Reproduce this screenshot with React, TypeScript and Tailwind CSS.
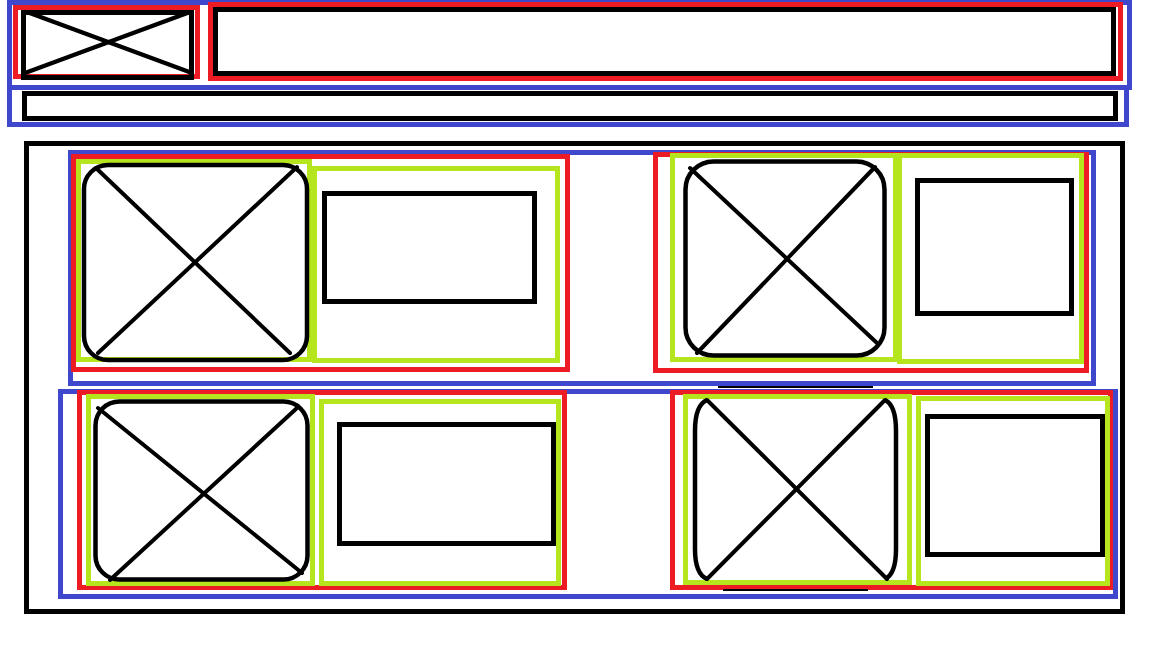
import type { ReactNode } from "react";

// wireframe palette
const BLUE = "border-[5px] border-[#3f48cc]";
const RED = "border-[5px] border-[#ed1c24]";
const GREEN = "border-[5px] border-[#b5e61d]";
const BLACK = "border-[5px] border-black";

interface CardProps {
  frame: string;
  image: string;
  text: string;
  block: string;
  shape: ReactNode;
}

function Card({ frame, image, text, block, shape }: CardProps) {
  return (
    <div className={`shrink-0 flex items-start ${RED} ${frame}`}>
      <div className={`shrink-0 ${GREEN} ${image}`}>{shape}</div>
      <div className={`shrink-0 ${GREEN} ${text}`}>
        <div className={`${BLACK} ${block}`} />
      </div>
    </div>
  );
}

function RoundedCross({
  w,
  h,
  rect,
  rx,
  a,
  b,
}: {
  w: number;
  h: number;
  rect: [number, number, number, number];
  rx: number;
  a: [number, number, number, number];
  b: [number, number, number, number];
}) {
  return (
    <svg width={w} height={h} viewBox={`0 0 ${w} ${h}`} className="block overflow-visible">
      <rect x={rect[0]} y={rect[1]} width={rect[2]} height={rect[3]} rx={rx} fill="none" stroke="black" strokeWidth={4.5} />
      <line x1={a[0]} y1={a[1]} x2={a[2]} y2={a[3]} stroke="black" strokeWidth={4} strokeLinecap="round" />
      <line x1={b[0]} y1={b[1]} x2={b[2]} y2={b[3]} stroke="black" strokeWidth={4} strokeLinecap="round" />
    </svg>
  );
}

function PinchedCross() {
  return (
    <svg width={219} height={181} viewBox="0 0 219 181" className="block overflow-visible">
      <path d="M19,1 Q7,6 7,32 L7,150 Q7,175 19,180" fill="none" stroke="black" strokeWidth={4.5} />
      <path d="M197,1 Q208,6 208,32 L208,150 Q208,175 197,180" fill="none" stroke="black" strokeWidth={4.5} />
      <line x1={19} y1={1} x2={199} y2={180} stroke="black" strokeWidth={4} strokeLinecap="round" />
      <line x1={197} y1={1} x2={19} y2={180} stroke="black" strokeWidth={4} strokeLinecap="round" />
      <line x1={30} y1={-12} x2={185} y2={-12} stroke="black" strokeWidth={2} />
      <line x1={35} y1={191} x2={180} y2={191} stroke="black" strokeWidth={2} />
    </svg>
  );
}

export default function App() {
  return (
    <div className="w-[1152px] h-[648px] bg-white overflow-hidden flex flex-col items-start">
      {/* header */}
      <div className={`shrink-0 ml-[7px] w-[1125px] h-[90px] flex items-start ${BLUE}`}>
        <div className={`shrink-0 ml-[1px] w-[187px] h-[74px] ${RED}`}>
          <svg width={173} height={70} viewBox="0 0 173 70" className="block ml-[3px] overflow-visible">
            <rect x={2.5} y={2.5} width={168} height={65} fill="none" stroke="black" strokeWidth={5} />
            <line x1={6} y1={2} x2={171} y2={63} stroke="black" strokeWidth={4.5} />
            <line x1={169} y1={2} x2={4} y2={63} stroke="black" strokeWidth={4.5} />
          </svg>
        </div>
        <div className={`shrink-0 ml-[8px] -mt-[3px] w-[915px] h-[79px] ${RED}`}>
          <div className={`w-[903px] h-[69px] ${BLACK}`} />
        </div>
      </div>

      {/* sub bar */}
      <div className={`shrink-0 ml-[7px] -mt-[5px] w-[1122px] h-[42px] ${BLUE}`}>
        <div className={`ml-[10px] mt-[1px] w-[1096px] h-[30px] ${BLACK}`} />
      </div>

      {/* content */}
      <div className={`shrink-0 ml-[24px] mt-[14px] w-[1101px] h-[473px] flex flex-col items-start ${BLACK}`}>
        <div className={`shrink-0 ml-[39px] mt-[4px] w-[1028px] h-[236px] flex items-start ${BLUE}`}>
          <Card
            frame="-ml-[2px] -mt-[1px] w-[499px] h-[218px]"
            image="w-[236px] h-[203px]"
            text="mt-[7px] w-[248px] h-[197px]"
            block="ml-[5px] mt-[20px] w-[215px] h-[113px]"
            shape={<RoundedCross w={226} h={193} rect={[3, 1, 223, 195]} rx={24} a={[15, 4, 209, 189]} b={[216, 3, 17, 189]} />}
          />
          <Card
            frame="ml-[83px] -mt-[3px] w-[436px] h-[221px]"
            image="ml-[12px] -mt-[4px] w-[228px] h-[209px]"
            text="-ml-[1px] -mt-[4px] w-[187px] h-[211px]"
            block="ml-[13px] mt-[20px] w-[159px] h-[138px]"
            shape={<RoundedCross w={218} h={199} rect={[10.5, 3.5, 199, 194]} rx={28} a={[15, 10, 202, 185]} b={[200, 9, 22, 195]} />}
          />
        </div>

        <div className={`shrink-0 ml-[29px] mt-[3px] w-[1060px] h-[210px] flex items-start ${BLUE}`}>
          <Card
            frame="ml-[14px] -mt-[4px] w-[490px] h-[200px]"
            image="ml-[4px] -mt-[1px] w-[229px] h-[192px]"
            text="ml-[4px] mt-[4px] w-[242px] h-[187px]"
            block="ml-[13px] mt-[18px] w-[219px] h-[124px]"
            shape={<RoundedCross w={219} h={182} rect={[4.5, 2.5, 212, 178]} rx={24} a={[7, 9, 211, 174]} b={[206, 9, 19, 181]} />}
          />
          <Card
            frame="ml-[103px] -mt-[4px] w-[443px] h-[200px]"
            image="ml-[8px] -mt-[1px] w-[229px] h-[191px]"
            text="ml-[4px] mt-[1px] w-[194px] h-[190px]"
            block="ml-[4px] mt-[13px] w-[180px] h-[143px]"
            shape={<PinchedCross />}
          />
        </div>
      </div>
    </div>
  );
}
